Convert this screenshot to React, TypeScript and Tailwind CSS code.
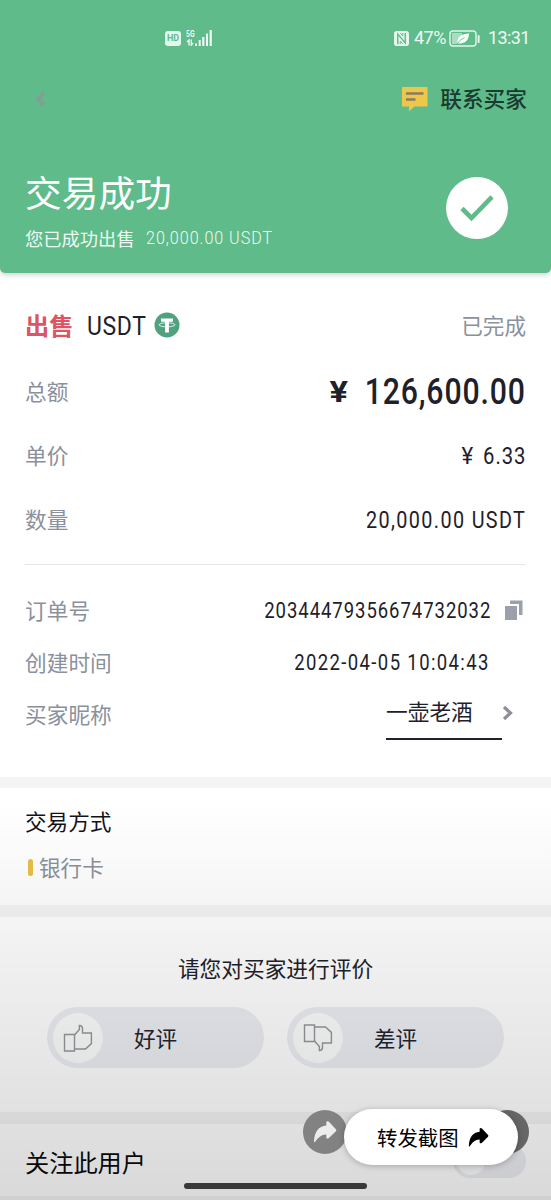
import type { ReactNode } from 'react';

function ThumbIcon({ down = false }: { down?: boolean }) {
  return (
    <svg
      viewBox="0 0 30 30"
      className={`h-[30px] w-[30px] ${down ? '-scale-y-100' : ''}`}
      fill="none"
      stroke="#96979b"
      strokeWidth="1.4"
    >
      <path d="M1.5 11.5H11.5V28H1.5Z" />
      <path d="M11.5 12L16.4 6.5V2.5Q19.5 2.5 19.5 5.6V10H28.4V20.6L22.5 26H11.5" />
    </svg>
  );
}

function ShareArrow({ className }: { className: string }) {
  return (
    <svg viewBox="0 0 22 22" className={className} fill="currentColor">
      <path d="M12.2 1.5Q13.4 .6 14.6 1.6L21 8.4Q21.8 9.3 21 10.2L14.6 16.5Q13 17.6 12.2 16.4V13.2Q6.5 12.8 1.8 20.2Q1 20.8 .9 19.7Q1.4 6.2 12.2 5Z" />
    </svg>
  );
}

function DetailRow({ label, height, children }: { label: string; height: string; children: ReactNode }) {
  return (
    <div className={`flex items-center justify-between ${height}`}>
      <span className="text-[21.7px] text-[#8b919c]">{label}</span>
      {children}
    </div>
  );
}

function StatusBar() {
  return (
    <div className="flex h-[76px] items-center justify-between pl-[165px] pr-[22px] text-white/90">
      <div className="flex items-center">
        <span className="flex h-[15px] w-4 items-center justify-center rounded-[3px] bg-[#e4f7ec] font-['Roboto'] text-[9px] font-bold text-[#5fbb8a]">
          HD
        </span>
        <span className="ml-[5px] flex h-[17px] w-[9px] flex-col font-['Roboto'] text-[8.5px] font-bold leading-[9px]">
          <span className="origin-left scale-x-[.8]">5G</span>
          <svg viewBox="0 0 8 7" className="h-[7px] w-2" fill="none" stroke="currentColor" strokeWidth="1.4">
            <path d="M1 3L3 1V6.5M5.3 .5V6L7 4" />
          </svg>
        </span>
        <svg viewBox="0 0 18 16" className="-ml-px h-4 w-[18px]" fill="currentColor">
          <path d="M1 13.5h2V16H1zM4.7 10h2v6h-2zM8.2 7h2.2v9H8.2zM12 3.5h2V16h-2zM15.6 0h2.2v16h-2.2z" />
        </svg>
      </div>
      <div className="flex items-center font-['Roboto']">
        <svg viewBox="0 0 16 16" className="h-[15px] w-[15px]">
          <rect width="16" height="16" rx="3" fill="#e4f7ec" />
          <path d="M4 14V3.3L12 12.7V2" fill="none" stroke="#5fbb8a" strokeWidth="1.5" />
          <path d="M6.6 2.2L9.4 5.3V2M6.6 14V10.7L9.4 13.8" fill="none" stroke="#5fbb8a" strokeWidth="1" />
        </svg>
        <span className="ml-[5px] w-[33px] whitespace-nowrap text-[18px] tracking-[-0.5px]">47%</span>
        <svg viewBox="0 0 31 17" className="ml-[2px] h-[17px] w-[31px]">
          <rect x="1" y="1" width="26" height="15" rx="3" fill="none" stroke="#e4f7ec" strokeWidth="1.4" />
          <path d="M3 3h10v11H3z" fill="#a9dcc0" />
          <path d="M8.5 13.5C7.5 6 13 4.3 20 3.2C20 12 14 14.3 9.5 12.4Z" fill="#f4fff8" />
          <path d="M8 14Q10.5 10 15.5 7.5" fill="none" stroke="#5fbb8a" strokeWidth=".8" />
          <rect x="28.6" y="5" width="2" height="8" rx="1" fill="#e4f7ec" />
        </svg>
        <span className="ml-2 w-[41px] whitespace-nowrap text-[18px] tracking-[-0.6px]">13:31</span>
      </div>
    </div>
  );
}

function RateButton({ label, down }: { label: string; down?: boolean }) {
  return (
    <button className="flex h-[61px] w-[217px] items-center rounded-full bg-[#edeef3] px-[6px]">
      <span className="flex h-[50px] w-[50px] items-center justify-center rounded-full bg-[#fcfdfd]">
        <ThumbIcon down={down} />
      </span>
      <span className="ml-[31px] text-[21.6px] text-[#20242d]">{label}</span>
    </button>
  );
}

export default function App() {
  return (
    <div className="relative flex h-[1200px] w-[551px] flex-col overflow-hidden bg-white font-['Noto_Sans_CJK_SC',sans-serif] leading-none text-[#1e2129]">
      <header className="h-[273px] shrink-0 rounded-b-[5px] bg-[#5fbb8a] shadow-[0_2px_5px_rgba(0,0,0,0.18)]">
        <StatusBar />
        <div className="flex h-11 items-center justify-between pl-[35px] pr-6">
          <svg viewBox="0 0 10 16" className="mt-[2px] h-4 w-[10px]" fill="none" stroke="#829f94" strokeWidth="4">
            <path d="M9 2L3 8L9 14" />
          </svg>
          <div className="flex items-center">
            <svg viewBox="0 0 26 26" className="mt-[2px] h-[26px] w-[27px]">
              <path d="M.5 1H26V20.5H13L7.5 25.5V20.5H.5Z" fill="#edc64a" />
              <path d="M4.5 7.5H22M4.5 13.5H14" stroke="#887c5e" strokeWidth="2.4" />
            </svg>
            <span className="ml-3 text-[21.7px] font-medium text-[#1b3a30]">联系买家</span>
          </div>
        </div>
        <div className="flex items-center justify-between pl-[25px] pr-[43px] pt-[52px] text-white">
          <div>
            <h1 className="text-[36.7px] leading-[38px]">交易成功</h1>
            <p className="mt-[17px] flex items-center text-[18.3px] leading-5 text-[#edfaf2]">
              您已成功出售
              <span className="ml-[11px] mt-px inline-block origin-left scale-x-[.86] whitespace-nowrap font-['Roboto'] text-[18.8px] font-light tracking-[1.1px]">
                20,000.00 USDT
              </span>
            </p>
          </div>
          <span className="-mt-1 flex h-[62px] w-[62px] shrink-0 items-center justify-center rounded-full bg-white">
            <svg viewBox="0 0 34 28" className="h-7 w-[34px]" fill="none" stroke="#5fbb8a" strokeWidth="4.6">
              <path d="M2 14.5L11.5 24L32 2.8" />
            </svg>
          </span>
        </div>
      </header>

      <section className="h-[504px] shrink-0 px-[25px] pt-[25px]">
        <div className="flex h-[55px] items-center justify-between">
          <div className="flex items-center">
            <span className="text-[24.2px] font-bold text-[#dc5465]">出售</span>
            <span className="ml-[14px] w-[61px] origin-left scale-x-[.9] whitespace-nowrap pt-[2px] font-['Roboto'] text-[25.5px] tracking-[0.7px]">
              USDT
            </span>
            <svg viewBox="0 0 26 26" className="-mt-px ml-[6px] h-[26px] w-[26px]">
              <circle cx="13" cy="13" r="12.5" fill="#50a17f" />
              <path d="M7 6.5H19V9.8H14.9V20.5H11.1V9.8H7Z" fill="#fff" />
              <ellipse cx="13" cy="12.8" rx="8" ry="2" fill="none" stroke="#fff" strokeWidth=".8" />
            </svg>
          </div>
          <span className="-mt-px text-[21.6px] text-[#8b919c]">已完成</span>
        </div>
        <DetailRow label="总额" height="h-[76px]">
          <span className="flex items-center pt-[2px] font-['Roboto'] font-medium">
            <span className="origin-right scale-x-[1.15] text-[30px] font-bold">¥</span>
            <span className="ml-[17px] flex w-[161px] justify-end">
              <span className="shrink-0 origin-right scale-x-[.84] whitespace-nowrap text-[36px] tracking-[1px]">
                126,600.00
              </span>
            </span>
          </span>
        </DetailRow>
        <DetailRow label="单价" height="h-[52px]">
          <span className="flex origin-right scale-x-[.88] pt-[2px] font-['Roboto'] text-[23px] tracking-[1.1px]">
            <span className="origin-right scale-x-[1.1]">¥</span>
            <span className="ml-[10px]">6.33</span>
          </span>
        </DetailRow>
        <DetailRow label="数量" height="h-[76px]">
          <span className="origin-right scale-x-[.86] whitespace-nowrap pt-[2px] font-['Roboto'] text-[23px] tracking-[1.6px]">
            20,000.00 USDT
          </span>
        </DetailRow>
        <div className="mt-[7px] h-px bg-[#e5e6e8]" />
        <div className="pt-[19px]">
          <DetailRow label="订单号" height="h-[52px]">
            <span className="flex items-center">
              <span className="origin-right scale-x-[.84] whitespace-nowrap pt-[2px] font-['Roboto'] text-[22px] tracking-[1.15px]">
                20344479356674732032
              </span>
              <svg viewBox="0 0 18 20" className="ml-[14px] mr-[3px] h-5 w-[18px]" fill="#9ca0aa">
                <path d="M0 6H12V20H0zM5 .5H17.5V15H14V4H5z" />
              </svg>
            </span>
          </DetailRow>
          <DetailRow label="创建时间" height="h-[52px]">
            <span className="mr-9 origin-right scale-x-[.84] whitespace-nowrap pt-[2px] font-['Roboto'] text-[22px] tracking-[1.65px]">
              2022-04-05 10:04:43
            </span>
          </DetailRow>
          <DetailRow label="买家昵称" height="h-[52px]">
            <span className="mr-3 flex items-center">
              <span className="mt-[-2px] h-[54px] w-[116px] border-b-2 border-[#1e2129] text-[21.7px] leading-[50px]">
                一壶老酒
              </span>
              <svg viewBox="0 0 12 16" className="-mt-[2px] h-4 w-3" fill="none" stroke="#8e9096" strokeWidth="3.2">
                <path d="M2 2L8.5 8L2 14" />
              </svg>
            </span>
          </DetailRow>
        </div>
      </section>

      <section className="h-[128px] shrink-0 border-t-[11px] border-[#f4f4f4] px-[25px] pt-[22px]">
        <h2 className="text-[21.6px] leading-[22px] text-[#101216]">交易方式</h2>
        <div className="mt-6 flex items-center pl-[3px]">
          <span className="h-[17px] w-[5px] rounded-full bg-[#e9bf45]" />
          <span className="ml-[6px] text-[21.6px] leading-[22px] text-[#8b919c]">银行卡</span>
        </div>
      </section>

      <section className="h-[207px] shrink-0 border-t-[12px] border-[#f4f4f4] pt-10">
        <p className="text-center text-[21.7px] leading-[22px]">请您对买家进行评价</p>
        <div className="mt-[28px] flex gap-[23px] pl-[47px]">
          <RateButton label="好评" />
          <RateButton label="差评" down />
        </div>
      </section>

      <section className="flex h-[84px] shrink-0 items-center justify-between border-t-[12px] border-[#f4f4f4] px-[25px]">
        <h2 className="pt-1 text-[24.2px] text-[#08090a]">关注此用户</h2>
        <span className="mt-[2px] flex h-[34px] w-[73px] items-center rounded-full bg-[#edeef3] px-1">
          <span className="h-7 w-7 rounded-full bg-[#fcfdfd]" />
        </span>
      </section>
      <div className="h-3 shrink-0 bg-[#f4f4f4]" />

      {/* bottom dimming */}
      <div className="pointer-events-none absolute inset-x-0 bottom-0 h-[400px] bg-linear-to-b from-black/0 to-black/15" />

      {/* floating share controls */}
      <span className="absolute left-[303px] top-[1110px] flex h-11 w-11 items-center justify-center rounded-full bg-[#828282] text-[#ececec]">
        <ShareArrow className="h-6 w-6" />
      </span>
      <span className="absolute left-[485px] top-[1110px] h-11 w-11 rounded-full bg-[#666]" />
      <button className="absolute left-[344px] top-[1109px] flex h-14 w-[174px] items-center rounded-full bg-white pl-[33px] text-[20.4px] text-black shadow-[0_1px_6px_rgba(0,0,0,0.25)]">
        转发截图
        <ShareArrow className="ml-[9px] h-[21px] w-[21px]" />
      </button>
      <div className="absolute left-[184px] top-[1183px] h-[6px] w-[183px] rounded-full bg-[#393939]" />
    </div>
  );
}
